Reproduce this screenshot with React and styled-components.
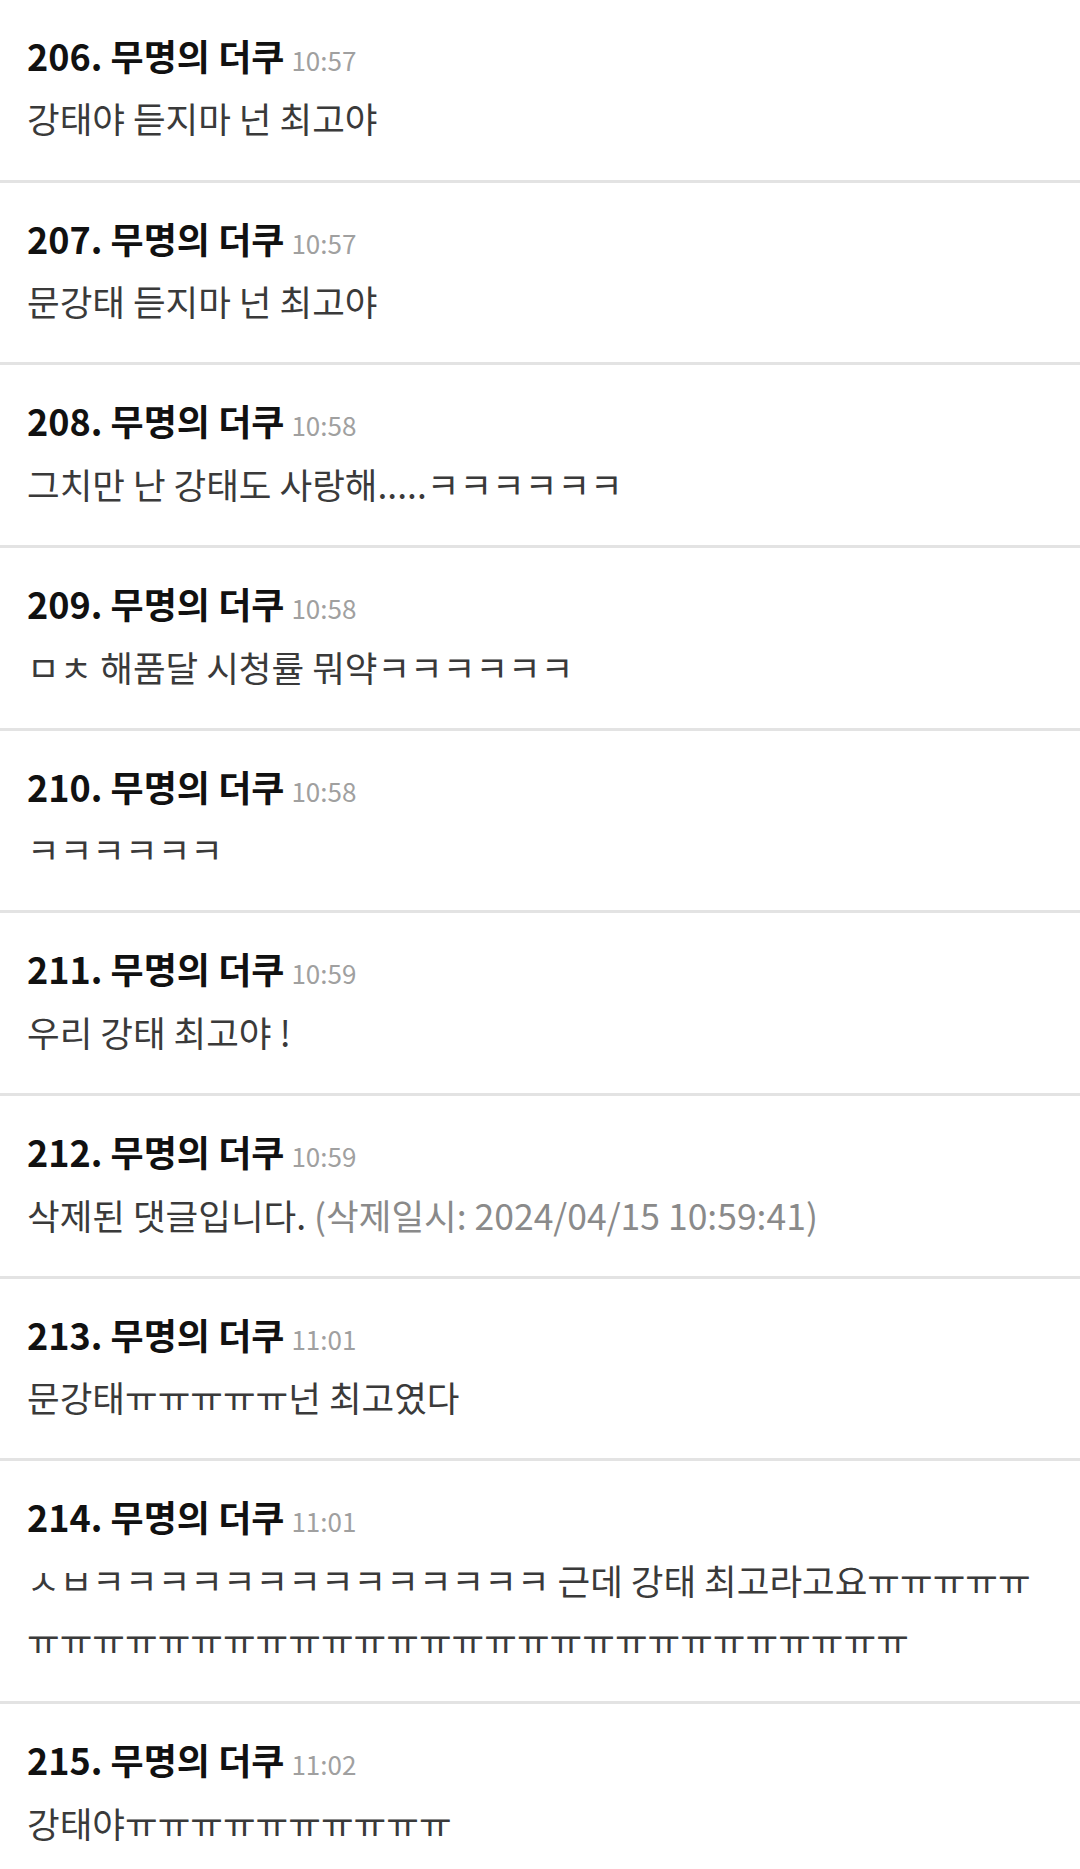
import React from 'react';
import styled, { createGlobalStyle } from 'styled-components';

const Global = createGlobalStyle`
  html, body { margin: 0; padding: 0; background: #ffffff; }
  body {
    font-family: "Noto Sans CJK KR", "Noto Sans", sans-serif;
    -webkit-font-smoothing: antialiased;
  }
`;

const List = styled.ul`
  list-style: none;
  margin: 0;
  padding: 0;
`;

const Item = styled.li`
  padding: 30.9px 27px 31.2px;
  border-bottom: 3px solid #e3e3e3;
`;

const Header = styled.div`
  font-size: 36px;
  font-weight: 700;
  color: #111111;
  line-height: 48px;
  white-space: nowrap;
`;

const Time = styled.span`
  font-size: 26px;
  line-height: 26px;
  font-weight: 400;
  color: #a0a0a0;
  margin-left: 7px;
`;

const Body = styled.p`
  margin: 9.6px 0 0;
  font-size: 35.5px;
  line-height: 60px;
  color: #3a3a3a;
`;

const Note = styled.span`
  color: #8a8a8a;
`;

const comments = [
  { no: 206, time: '10:57', text: '강태야 듣지마 넌 최고야' },
  { no: 207, time: '10:57', text: '문강태 듣지마 넌 최고야' },
  { no: 208, time: '10:58', text: '그치만 난 강태도 사랑해.....ㅋㅋㅋㅋㅋㅋ' },
  { no: 209, time: '10:58', text: 'ㅁㅊ 해품달 시청률 뭐약ㅋㅋㅋㅋㅋㅋ' },
  { no: 210, time: '10:58', text: 'ㅋㅋㅋㅋㅋㅋ' },
  { no: 211, time: '10:59', text: '우리 강태 최고야 !' },
  { no: 212, time: '10:59', text: '삭제된 댓글입니다.', note: ' (삭제일시: 2024/04/15 10:59:41)' },
  { no: 213, time: '11:01', text: '문강태ㅠㅠㅠㅠㅠ넌 최고였다' },
  { no: 214, time: '11:01', text: 'ㅅㅂㅋㅋㅋㅋㅋㅋㅋㅋㅋㅋㅋㅋㅋㅋ 근데 강태 최고라고요ㅠㅠㅠㅠㅠㅠㅠㅠㅠㅠㅠㅠㅠㅠㅠㅠㅠㅠㅠㅠㅠㅠㅠㅠㅠㅠㅠㅠㅠㅠㅠㅠ' },
  { no: 215, time: '11:02', text: '강태야ㅠㅠㅠㅠㅠㅠㅠㅠㅠㅠ' },
];

export default function App() {
  return (
    <>
      <Global />
      <List>
        {comments.map((c) => (
          <Item key={c.no}>
            <Header>
              {c.no}. 무명의 더쿠<Time>{c.time}</Time>
            </Header>
            <Body>
              {c.text}
              {c.note && <Note>{c.note}</Note>}
            </Body>
          </Item>
        ))}
      </List>
    </>
  );
}
